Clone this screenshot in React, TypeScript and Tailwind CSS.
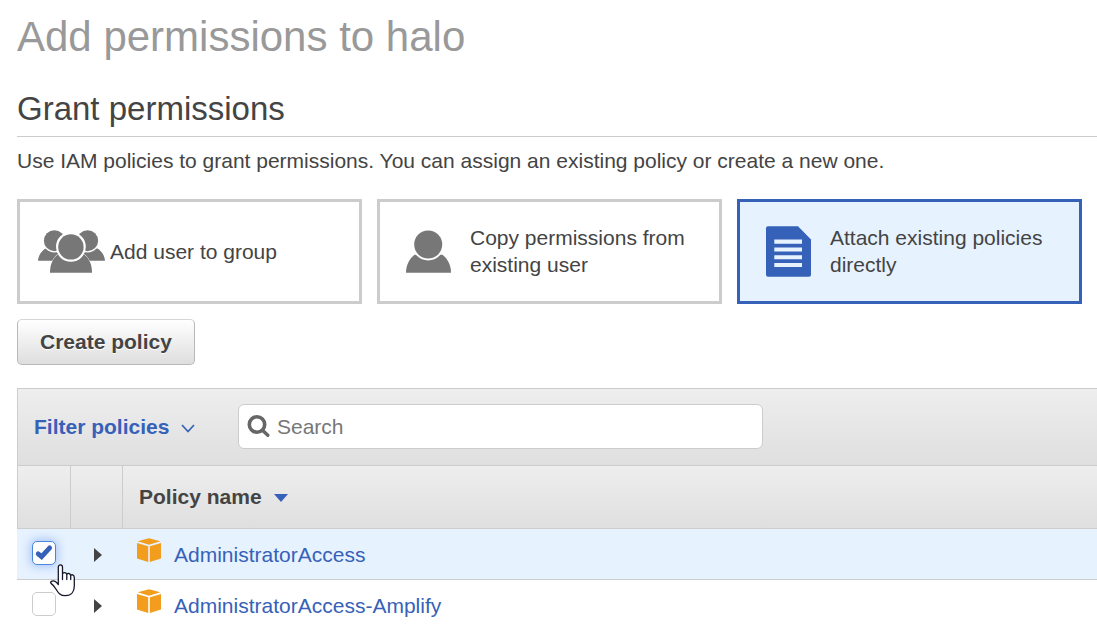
import { useState } from "react";
import type { ReactNode } from "react";

function GroupIcon() {
  return (
    <svg viewBox="0 0 67 55" className="h-[55px] w-[67px] shrink-0 fill-[#777]" aria-hidden="true">
      <path d="M0 36.7C.5 31.5 3 27.5 7.5 24.5H18L22 28.7C18.500 30.500 16 33 14.300 36.700Z" />
      <path d="M67 36.7C66.500 31.500 64 27.500 59.500 24.500H49L44 28.700C47.500 30.500 50 33 51.700 36.700Z" />
      <circle cx="16.400" cy="16.700" r="10.500" stroke="#fff" strokeWidth="2.600" paintOrder="stroke" />
      <circle cx="49.600" cy="16.700" r="10.500" stroke="#fff" strokeWidth="2.600" paintOrder="stroke" />
      <path d="M12 48.700C12 41 14.500 34.500 20 30.300H46C51.500 34.500 54 41 54 48.700Z" />
      <circle cx="32.900" cy="22.900" r="12.700" stroke="#fff" strokeWidth="4.400" paintOrder="stroke" />
    </svg>
  );
}

function UserIcon() {
  return (
    <svg viewBox="0 0 67 55" className="h-[55px] w-[67px] shrink-0 fill-[#777]" aria-hidden="true">
      <path d="M8 48.700C8 41.500 11 35 16.500 30.700H44.500C50 35 53 41.500 53 48.700Z" />
      <circle cx="30.200" cy="20.500" r="14" stroke="#fff" strokeWidth="3.800" paintOrder="stroke" />
    </svg>
  );
}

function DocumentIcon() {
  return (
    <svg viewBox="0 0 67 55" className="h-[55px] w-[67px] shrink-0" aria-hidden="true">
      <path
        fill="#3661b8"
        d="M10 2.300H40L53 15.500V50.700A2 2 0 0 1 51 52.700H10A2 2 0 0 1 8 50.700V4.300A2 2 0 0 1 10 2.300Z"
      />
      <path
        fill="#e7f2ff"
        d="M16.300 15.500H44V19.700H16.300ZM16.300 23.500H44V27.500H16.300ZM16.300 31.300H44V35.300H16.300ZM16.300 39H44V43H16.300Z"
      />
    </svg>
  );
}

function CubeIcon() {
  return (
    <svg viewBox="0 0 24 24" className="h-6 w-6 shrink-0 fill-[#f29d1e]" aria-hidden="true">
      <path d="M12 .200L23.400 3.300L12 6.700L.600 3.300Z" />
      <path d="M0 4.900L11.200 8.200V24L0 20.600Z" />
      <path d="M24 4.900L12.800 8.200V24L24 20.600Z" />
    </svg>
  );
}

function HandCursor() {
  return (
    <svg
      viewBox="0 0 26 33"
      className="pointer-events-none absolute top-[99px] left-[33px] z-10 h-[33px] w-[26px]"
      aria-hidden="true"
    >
      <path
        fill="#fff"
        stroke="#14162a"
        strokeWidth="1.300"
        strokeLinejoin="round"
        strokeLinecap="round"
        d="M8.300 20V3.200C8.300 .2 12.500 .2 12.500 3.200V10.200C12.900 7.800 16.600 8.200 16.800 10.800C17.300 8.600 20.500 9.200 20.700 11.800C21.300 9.800 24.300 10.800 24.300 13.500V22C24.300 27.500 21.500 31.700 15.500 31.700C10 31.700 8 28.500 5.900 25C4.300 22.300 2.800 20.700 1 19.400C-.2 17.800 2.300 16.300 4.500 17.200C6.200 17.900 7.300 19.200 8.300 20.500M12.500 10V15.500M16.800 10.800V15.500M20.700 11.800V15.500"
      />
    </svg>
  );
}

function OptionCard({
  icon,
  selected,
  onSelect,
  children,
}: {
  icon: ReactNode;
  selected: boolean;
  onSelect: () => void;
  children: ReactNode;
}) {
  return (
    <button
      type="button"
      aria-pressed={selected}
      onClick={onSelect}
      className={`flex min-h-[105px] items-center gap-[5px] border-3 pr-5 pl-[18px] text-left ${
        selected ? "border-[#3661b8] bg-[#e7f2ff]" : "border-[#ccc] bg-white"
      }`}
    >
      {icon}
      <span className="pb-px">{children}</span>
    </button>
  );
}

function PolicyRow({ name, initial }: { name: string; initial: boolean }) {
  const [checked, setChecked] = useState(initial);
  return (
    <tr className={`group h-[51px] ${checked ? "bg-[#e7f2ff]" : "bg-white"}`}>
      <td className="border-b border-[#ccc] pt-3 pl-[15px] align-top group-last:border-b-0">
        <div className="grid h-6 w-6">
          <input
            type="checkbox"
            aria-label={`Select ${name}`}
            checked={checked}
            onChange={(e) => setChecked(e.target.checked)}
            className="col-start-1 row-start-1 h-6 w-6 appearance-none rounded-[5px] border border-[#ccc] bg-white checked:border-[#4a86dc] checked:shadow-[0_0_10px_2px_#a9c6f5]"
          />
          {checked && (
            <svg viewBox="0 0 24 24" className="pointer-events-none z-1 col-start-1 row-start-1 h-6 w-6" aria-hidden="true">
              <path d="M6.200 12.800L9.600 15.600L17.700 6.900" fill="none" stroke="#3661b8" strokeWidth="4.800" strokeLinecap="round" />
            </svg>
          )}
        </div>
      </td>
      <td className="border-b border-[#ccc] pt-[19px] pl-[23px] align-top group-last:border-b-0">
        <button type="button" aria-label={`Expand ${name}`} className="block">
          <svg viewBox="0 0 8 14" className="h-[14px] w-2 fill-[#444]" aria-hidden="true">
            <path d="M0 0L8 7L0 14Z" />
          </svg>
        </button>
      </td>
      <td className="border-b border-[#ccc] pt-[9px] pl-[14px] align-top group-last:border-b-0">
        <div className="flex items-start gap-[13px]">
          <CubeIcon />
          <a href="#policy" className="mt-[3px] text-[#3661b8]">
            {name}
          </a>
        </div>
      </td>
    </tr>
  );
}

export default function App() {
  const [method, setMethod] = useState("attach");
  return (
    <main className="overflow-x-hidden bg-white pt-[13px] pl-[17px] font-['Liberation_Sans',Arial,sans-serif] text-[21px] leading-[27px] text-[#444]">
      <h1 className="text-[42px] leading-[48px] text-[#999]">Add permissions to halo</h1>
      <h2 className="mt-[29px] border-b border-[#ccc] pb-2 text-[33px] leading-[38px]">Grant permissions</h2>
      <p className="mt-[10px]">
        Use IAM policies to grant permissions. You can assign an existing policy or create a new one.
      </p>

      <div className="mt-[25px] grid grid-cols-3 gap-[15px] pr-[15px]">
        <OptionCard icon={<GroupIcon />} selected={method === "group"} onSelect={() => setMethod("group")}>
          Add user to group
        </OptionCard>
        <OptionCard icon={<UserIcon />} selected={method === "copy"} onSelect={() => setMethod("copy")}>
          Copy permissions from existing user
        </OptionCard>
        <OptionCard icon={<DocumentIcon />} selected={method === "attach"} onSelect={() => setMethod("attach")}>
          Attach existing policies directly
        </OptionCard>
      </div>

      <button
        type="button"
        className="mt-[15px] block h-[46px] rounded-[5px] border border-[#b8b8b8] border-t-[#d6d6d6] bg-linear-to-b from-white to-[#dedede] px-[22px] pb-[2px] font-bold [text-shadow:0_1px_0_#fff]"
      >
        Create policy
      </button>

      <section className="mt-[23px]">
        <div className="flex h-[77px] items-center border-t border-l border-[#ccc] bg-linear-to-b from-[#eee] to-[#dfdfdf] pb-[2px] pl-4">
          <button type="button" className="flex w-[204px] items-center gap-3 font-bold text-[#3661b8]">
            Filter policies
            <svg viewBox="0 0 14 9" className="mt-1 h-[9px] w-[14px]" aria-hidden="true">
              <path d="M1 1L7 7.500L13 1" fill="none" stroke="#3661b8" strokeWidth="1.700" />
            </svg>
          </button>
          <label className="flex h-[45px] w-[525px] items-center gap-[7px] rounded-[6px] border border-[#ccc] bg-white pl-2">
            <svg viewBox="0 0 23 23" className="h-[23px] w-[23px] shrink-0" fill="none" stroke="#666" aria-hidden="true">
              <circle cx="10" cy="9.500" r="7.700" strokeWidth="3.600" />
              <path d="M15.500 15.300L20.800 20.300" strokeWidth="3.400" strokeLinecap="round" />
            </svg>
            <input
              type="text"
              aria-label="Search policies"
              placeholder="Search"
              className="min-w-0 flex-1 bg-transparent outline-none placeholder:text-[#777]"
            />
          </label>
        </div>

        <div className="relative">
          <table aria-label="Policies" className="w-full table-fixed border-separate border-spacing-0">
            <colgroup>
              <col className="w-[54px]" />
              <col className="w-[52px]" />
              <col />
            </colgroup>
            <thead>
              <tr className="h-[64px]">
                <th aria-label="Select" className="border border-[#ccc] bg-linear-to-b from-[#eee] to-[#dfdfdf]" />
                <th aria-label="Expand" className="border-y border-r border-[#ccc] bg-linear-to-b from-[#eee] to-[#dfdfdf]" />
                <th className="border-y border-[#ccc] bg-linear-to-b from-[#eee] to-[#dfdfdf] pb-[2px] pl-4 text-left font-bold">
                  <button type="button" className="flex items-center gap-3">
                    Policy name
                    <svg viewBox="0 0 14 8" className="mt-[3px] h-2 w-[14px] fill-[#3661b8]" aria-hidden="true">
                      <path d="M0 0H14L7 8Z" />
                    </svg>
                  </button>
                </th>
              </tr>
            </thead>
            <tbody>
              <PolicyRow name="AdministratorAccess" initial={true} />
              <PolicyRow name="AdministratorAccess-Amplify" initial={false} />
            </tbody>
          </table>
          <HandCursor />
        </div>
      </section>
    </main>
  );
}
